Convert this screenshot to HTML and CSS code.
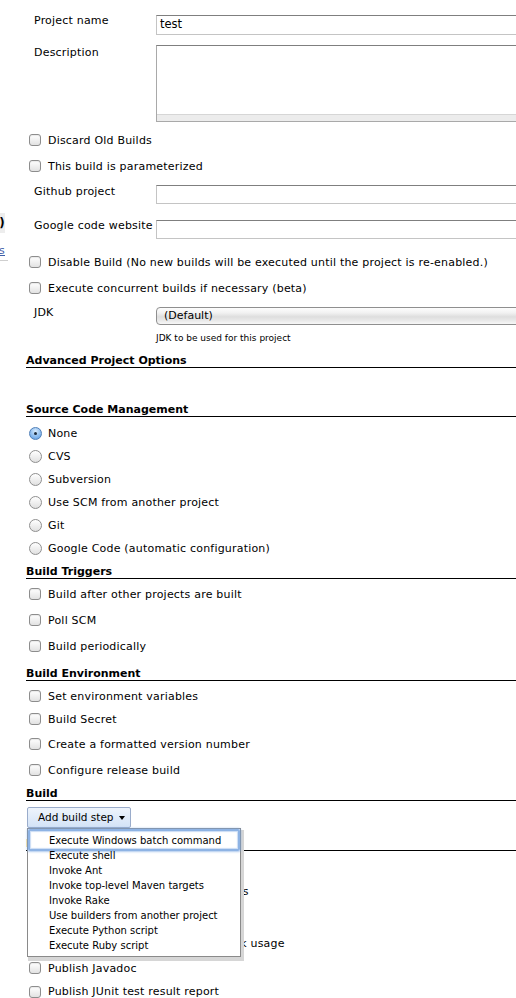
FILE: index.html
```html
<!DOCTYPE html>
<html>
<head>
<meta charset="utf-8">
<link rel="stylesheet" href="styles.css">
</head>
<body>
<div class="page">
  <aside class="side">
    <div class="side-box"><span>(0)</span></div>
    <div class="side-link"><a href="#">trends</a></div>
    <div class="side-rule"></div>
  </aside>
  <main class="main">
    <div class="field f-name">
      <div class="lbl">Project name</div>
      <div class="txt txt-name">test</div>
    </div>
    <div class="field f-desc">
      <div class="lbl lbl-desc">Description</div>
      <div class="area"><div class="area-bar"></div></div>
    </div>

    <div class="checks c-top">
      <div class="chk"><span class="box"></span>Discard Old Builds</div>
      <div class="chk"><span class="box"></span>This build is parameterized</div>
    </div>

    <div class="field f-github">
      <div class="lbl">Github project</div>
      <div class="txt txt-github"></div>
    </div>
    <div class="field f-google">
      <div class="lbl">Google code website</div>
      <div class="txt txt-google"></div>
    </div>

    <div class="checks c-disable">
      <div class="chk"><span class="box"></span>Disable Build (No new builds will be executed until the project is re-enabled.)</div>
      <div class="chk"><span class="box"></span>Execute concurrent builds if necessary (beta)</div>
    </div>

    <div class="field f-jdk">
      <div class="lbl">JDK</div>
      <div class="sel">(Default)</div>
    </div>
    <div class="hint">JDK to be used for this project</div>

    <div class="sect s-adv">Advanced Project Options</div>

    <div class="sect s-scm">Source Code Management</div>
    <div class="radios">
      <div class="rad"><span class="dot on"></span>None</div>
      <div class="rad"><span class="dot"></span>CVS</div>
      <div class="rad"><span class="dot"></span>Subversion</div>
      <div class="rad"><span class="dot"></span>Use SCM from another project</div>
      <div class="rad"><span class="dot"></span>Git</div>
      <div class="rad"><span class="dot"></span>Google Code (automatic configuration)</div>
    </div>

    <div class="sect s-trig">Build Triggers</div>
    <div class="checks c-trig">
      <div class="chk"><span class="box"></span>Build after other projects are built</div>
      <div class="chk"><span class="box"></span>Poll SCM</div>
      <div class="chk"><span class="box"></span>Build periodically</div>
    </div>

    <div class="sect s-env">Build Environment</div>
    <div class="checks c-env">
      <div class="chk h22"><span class="box"></span>Set environment variables</div>
      <div class="chk h24"><span class="box"></span>Build Secret</div>
      <div class="chk"><span class="box"></span>Create a formatted version number</div>
      <div class="chk"><span class="box"></span>Configure release build</div>
    </div>

    <div class="sect s-build">Build</div>
    <div class="step">
      <div class="btn">Add build step<span class="arrow"></span></div>
      <div class="menu">
        <div class="item focus">Execute Windows batch command</div>
        <div class="item">Execute shell</div>
        <div class="item">Invoke Ant</div>
        <div class="item">Invoke top-level Maven targets</div>
        <div class="item">Invoke Rake</div>
        <div class="item">Use builders from another project</div>
        <div class="item">Execute Python script</div>
        <div class="item">Execute Ruby script</div>
      </div>
    </div>

    <div class="sect s-post">Post-build Actions</div>
    <div class="checks c-post">
      <div class="chk"><span class="box"></span>Archive the artifacts</div>
      <div class="chk"><span class="box"></span>Aggregate downstream test results</div>
      <div class="chk"><span class="box"></span>Build other projects</div>
      <div class="chk"><span class="box"></span>Record fingerprints of files to track usage</div>
      <div class="chk h24"><span class="box"></span>Publish Javadoc</div>
      <div class="chk h23"><span class="box"></span>Publish JUnit test result report</div>
    </div>
  </main>
</div>
</body>
</html>
```

FILE: styles.css
```css
html, body {
  margin: 0;
  padding: 0;
  background: #fff;
  overflow: hidden;
}
body {
  width: 516px;
  height: 998px;
  font-family: "DejaVu Sans", Verdana, sans-serif;
  font-size: 11px;
  line-height: 13px;
  letter-spacing: 0.2px;
  color: #000;
}
.page {
  display: flex;
  width: 516px;
  height: 998px;
  overflow: hidden;
}

/* left sidebar remnants */
.side {
  width: 26px;
  flex: none;
  display: flex;
  flex-direction: column;
  padding-top: 213px;
}
.side-box {
  width: 5px;
  height: 20px;
  display: flex;
  justify-content: flex-end;
  align-items: center;
  overflow: hidden;
  background: #ededed;
  font-weight: bold;
  font-size: 12px;
  white-space: nowrap;
}
.side-link {
  width: 5px;
  height: 13px;
  margin-top: 11px;
  display: flex;
  justify-content: flex-end;
  overflow: hidden;
  white-space: nowrap;
  font-size: 11px;
}
.side-link a {
  color: #3f5fa8;
  text-decoration: underline;
}
.side-rule {
  width: 8px;
  height: 1px;
  margin-top: 3px;
  background: #cfcfcf;
}

.main {
  flex: 1;
  min-width: 0;
  display: flex;
  flex-direction: column;
  overflow: visible;
}

/* label / input rows */
.field {
  display: flex;
  align-items: flex-start;
}
.lbl {
  width: 122px;
  flex: none;
  padding-left: 8px;
  white-space: nowrap;
}
.txt {
  flex: none;
  width: 420px;
  box-sizing: border-box;
  border: 1px solid #c4c4c4;
  border-top-color: #7f7f7f;
  background: #fff;
  font-size: 11.5px;
  line-height: 17px;
  letter-spacing: 0;
  padding-left: 3px;
}
.f-name { margin-top: 14px; }
.txt-name { margin-top: 1px; height: 20px; }
.f-desc { margin-top: 10px; }
.lbl-desc { padding-top: 1px; }
.area {
  flex: none;
  width: 420px;
  height: 77px;
  box-sizing: border-box;
  border: 1px solid #a9a9a9;
  border-top-color: #7f7f7f;
  display: flex;
  flex-direction: column;
  justify-content: flex-end;
}
.area-bar {
  height: 6px;
  background: #ececec;
  border-top: 1px solid #d6d6d6;
}
.f-github .lbl { padding-top: 6px; }
.txt-github { margin-top: 6px; height: 19px; }
.f-google .lbl { padding-top: 15px; }
.txt-google { margin-top: 16px; height: 19px; }

.f-jdk .lbl { padding-top: 5px; }
.sel {
  flex: none;
  width: 420px;
  height: 18px;
  margin-top: 6px;
  box-sizing: border-box;
  border: 1px solid #8f8f8f;
  border-radius: 4px 0 0 4px;
  background: linear-gradient(#fdfdfd 0%, #f2f2f2 30%, #dedede 55%, #e9e9e9 78%, #f7f7f7 100%);
  padding-left: 7px;
  line-height: 16px;
  font-size: 11px;
  letter-spacing: 0;
}
.hint {
  margin-top: 8px;
  padding-left: 130px;
  font-size: 9px;
  line-height: 11px;
  letter-spacing: 0;
  white-space: nowrap;
}

/* checkbox rows */
.checks {
  display: flex;
  flex-direction: column;
}
.chk, .rad {
  display: flex;
  align-items: center;
  height: 26px;
  padding-left: 3px;
  white-space: nowrap;
}
.chk.h22 { height: 22px; }
.chk.h23 { height: 23px; }
.chk.h24 { height: 24px; }
.box {
  flex: none;
  width: 12px;
  height: 12px;
  box-sizing: border-box;
  border: 1px solid #8d8d8d;
  border-radius: 3px;
  background: linear-gradient(#ffffff, #e2e2e2);
  box-shadow: inset 0 1px 1px rgba(0,0,0,0.08);
  margin-right: 7px;
}
.c-top { margin-top: 5px; }
.c-disable { margin-top: 10px; }
.c-trig { margin-top: 2px; }
.c-env { margin-top: 4px; }
.c-post { margin-top: 1px; }

/* radios */
.radios {
  display: flex;
  flex-direction: column;
  margin-top: 5px;
}
.rad { height: 23px; }
.dot {
  flex: none;
  width: 13px;
  height: 13px;
  box-sizing: border-box;
  border: 1px solid #8f8f8f;
  border-radius: 50%;
  background: linear-gradient(#ffffff, #e0e0e0);
  margin-right: 6px;
  display: flex;
  align-items: center;
  justify-content: center;
}
.dot.on {
  border-color: #4f7fb8;
  background: radial-gradient(circle at 50% 30%, #d8ebfb 0%, #8dbdf0 55%, #5b97da 100%);
}
.dot.on::after {
  content: "";
  width: 3px;
  height: 3px;
  border-radius: 50%;
  background: #1d2b3c;
}

/* section headers */
.sect {
  font-weight: bold;
  font-size: 11px;
  line-height: 13px;
  letter-spacing: 0;
  border-bottom: 1px solid #000;
  white-space: nowrap;
}
.s-adv { margin-top: 10px; }
.s-scm { margin-top: 35px; }
.s-trig { margin-top: 5px; }
.s-env { margin-top: 8px; }
.s-build { margin-top: 4px; }
.s-post { margin-top: 9px; }

/* add build step */
.step {
  position: relative;
  margin-top: 6px;
  padding-left: 1px;
  display: flex;
}
.btn {
  width: 104px;
  height: 21px;
  box-sizing: border-box;
  border: 1px solid #9aaccb;
  border-radius: 2px;
  background: linear-gradient(#eef4fc, #d3e3f7);
  display: flex;
  align-items: center;
  padding-left: 10px;
  font-size: 10.5px;
  letter-spacing: 0;
  white-space: nowrap;
}
.arrow {
  margin-left: 5px;
  width: 0;
  height: 0;
  border-left: 3.5px solid transparent;
  border-right: 3.5px solid transparent;
  border-top: 4px solid #000;
}
.menu {
  position: absolute;
  top: 21px;
  left: 1px;
  width: 214px;
  height: 129px;
  box-sizing: border-box;
  border: 1px solid #8a8a8a;
  background: #fff;
  padding-top: 4px;
  box-shadow: 2px 3px 0 1px #d6d6d6;
  z-index: 5;
}
.item {
  position: relative;
  height: 15px;
  line-height: 15px;
  padding-left: 21px;
  font-size: 10px;
  letter-spacing: 0;
  white-space: nowrap;
}
.item.focus::after {
  content: "";
  position: absolute;
  left: 0;
  right: 0;
  top: -4px;
  bottom: -3px;
  border: 2px solid #8eb3e4;
  border-radius: 2px;
  box-shadow: 0 0 2px 1px rgba(120,165,225,0.6), inset 0 0 1px 1px rgba(180,205,240,0.7);
}
```
